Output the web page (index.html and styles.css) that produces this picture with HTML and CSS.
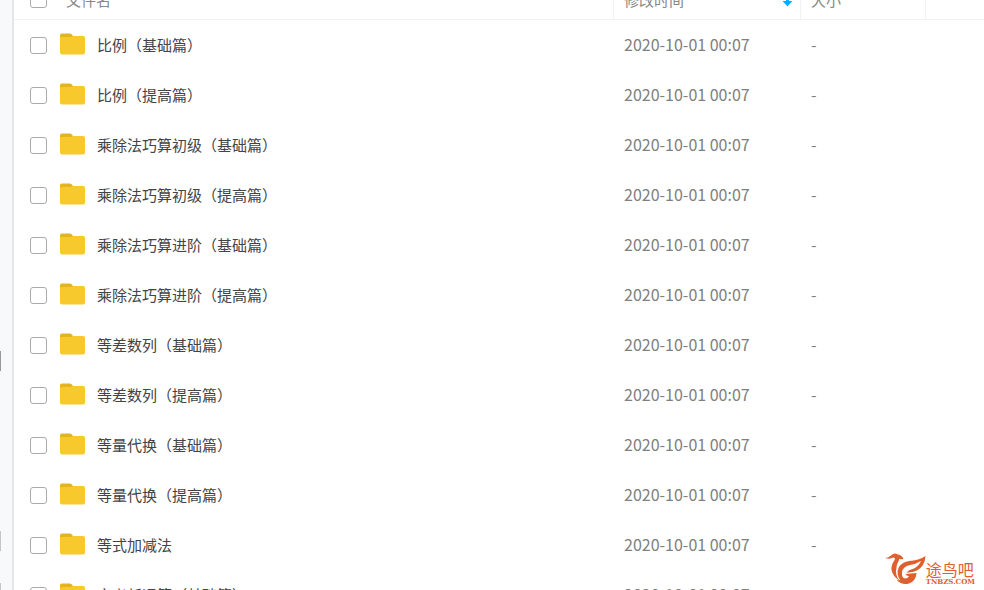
FILE: index.html
```html
<!DOCTYPE html>
<html lang="zh-CN">

<head>
    <meta charset="UTF-8">
    <meta name="viewport" content="width=device-width, initial-scale=1.0">
    <title>文件列表</title>
    <link rel="stylesheet" href="styles.css">
</head>

<body>

    <svg class="symbols" aria-hidden="true">
        <symbol id="folder" viewBox="0 0 25 22">
            <path d="M0 10V2.500Q0 .5 2 .5H10Q11.500 .5 12.300 2L13.500 4V10Z" fill="#e3b41f" />
            <path d="M0 5Q0 4 1.500 4H11L13 3H23Q25 3 25 5V19.500Q25 21.500 23 21.500H2Q0 21.500 0 19.500Z" fill="#f7c92c" />
        </symbol>
    </svg>

    <div class="page">
        <aside class="rail">
            <span class="rail-mark"></span>
            <span class="rail-mark light"></span>
            <span class="rail-mark light"></span>
        </aside>

        <main class="files">
            <table>
                <colgroup>
                    <col class="col-check">
                    <col class="col-name">
                    <col class="col-date">
                    <col class="col-size">
                    <col class="col-rest">
                </colgroup>
                <thead>
                    <tr>
                        <th><input type="checkbox" aria-label="全选"></th>
                        <th>文件名</th>
                        <th class="split">
                            <div class="sort">修改时间
                                <svg width="11" height="14" viewBox="0 0 11 14" aria-hidden="true">
                                    <path d="M4 0H7V8H10.500L5.500 13.500L.5 8H4Z" fill="#09aaff" />
                                </svg>
                            </div>
                        </th>
                        <th class="split">大小</th>
                        <th class="split"></th>
                    </tr>
                </thead>
                <tbody id="file-list"></tbody>
            </table>
        </main>
    </div>

    <div class="logo">
        <svg width="41" height="34" viewBox="0 0 41 34" aria-hidden="true">
            <path d="M0 6Q3 6 6 3.500Q9 .5 12 2Q16 4 14 8Q11 13 11 19Q11 25 15 29Q8 25 6.500 18Q6 13 9 9Q11 6 8.500 5.500Q5 7.500 0 6Z" fill="#e0602d" />
            <path d="M13 2.500Q17 3 18.500 7Q15 8 12.500 6Z" fill="#e0602d" />
            <path d="M40.500 4Q40 14 32 18.500Q27 21 21.500 20.500Q24 17.500 29 16.500Q34 14 36 9Q31 12 25 13Q18 14.500 17 20Q16.500 26 20 26.500Q23 26.500 24 24Q21 24 20.500 22Q26 21.500 31.500 21Q31 29 24 31.500Q17 33.500 11.500 28Q14 28.500 15 28Q11 22 13.500 16Q16 10.500 24 9Q34 8.500 40.500 4Z" fill="#e0602d" />
        </svg>
        <div class="logo-text">
            <span class="logo-name">途鸟吧</span>
            <span class="logo-site">TNBZS.COM</span>
        </div>
    </div>

    <script>
        const files = [
            "比例（基础篇）",
            "比例（提高篇）",
            "乘除法巧算初级（基础篇）",
            "乘除法巧算初级（提高篇）",
            "乘除法巧算进阶（基础篇）",
            "乘除法巧算进阶（提高篇）",
            "等差数列（基础篇）",
            "等差数列（提高篇）",
            "等量代换（基础篇）",
            "等量代换（提高篇）",
            "等式加减法",
            "定义新运算（基础篇）"
        ];

        document.querySelector("#file-list").innerHTML = files.map((name, i) => `
            <tr>
                <td><input type="checkbox" id="file-${i}"></td>
                <td>
                    <label class="file-name" for="file-${i}">
                        <svg width="25" height="22" aria-hidden="true"><use href="#folder" /></svg>
                        ${name}
                    </label>
                </td>
                <td class="date">2020-10-01 00:07</td>
                <td class="size">-</td>
                <td></td>
            </tr>
        `).join("");
    </script>

</body>

</html>
```
FILE: styles.css
```css
body {
    margin: 0;
    height: 100vh;
    overflow: hidden;
    background-color: #fff;
    color: #424446;
    font-family: "Noto Sans CJK SC", sans-serif;
    font-size: 15px;
}

.symbols {
    display: none;
}

.page {
    display: flex;
    height: 100vh;
    overflow: hidden;
}

.rail {
    display: flex;
    flex-direction: column;
    flex: none;
    width: 12px;
    padding-top: 351px;
    border-right: 2px solid #e4e6ea;
    background-color: #f7f9fb;
}

.rail-mark {
    flex: none;
    width: 1px;
    height: 20px;
    background-color: #999;
}

.rail-mark.light {
    background-color: #c4c6c8;
}

.rail-mark + .rail-mark {
    margin-top: 160px;
}

.rail-mark.light + .rail-mark.light {
    margin-top: 32px;
}

.files {
    flex: 1;
    min-width: 0;
}

/* the list is scrolled down a little, under the top edge */
table {
    width: 100%;
    margin-top: -18px;
    table-layout: fixed;
    border-collapse: separate;
    border-spacing: 0;
}

.col-check {
    width: 46px;
}

.col-date {
    width: 187px;
}

.col-size {
    width: 125px;
}

.col-rest {
    width: 59px;
}

th,
td {
    box-sizing: border-box;
    padding: 0;
    text-align: left;
    white-space: nowrap;
}

th {
    height: 38px;
    padding-bottom: 2px;
    border-bottom: 1px solid #f1f2f4;
    color: #888;
    font-weight: normal;
    line-height: 34px;
}

th:nth-child(2) {
    padding-left: 6px;
}

th.split {
    padding-left: 10px;
    border-left: 1px solid #f1f2f4;
}

td {
    height: 50px;
}

td + td {
    padding-bottom: 2px;
}

.sort {
    display: flex;
    justify-content: space-between;
    align-items: center;
    padding-right: 7px;
}

input[type="checkbox"] {
    display: block;
    appearance: none;
    width: 17px;
    height: 17px;
    margin: 0 0 0 16px;
    border: 1px solid #aaa;
    border-radius: 3px;
    background-color: #fff;
}

input[type="checkbox"]:checked {
    background-color: #09aaff;
}

.file-name {
    display: flex;
    align-items: center;
    gap: 12px;
}

.date,
.size {
    padding-left: 11px;
    color: #808080;
    font-size: 16px;
}

.logo {
    position: absolute;
    right: 9px;
    bottom: 4px;
    display: flex;
    align-items: flex-end;
    color: #e0602d;
}

.logo-text {
    display: flex;
    flex-direction: column;
}

.logo-name {
    font-size: 16px;
    line-height: 18px;
}

.logo-site {
    font-family: "DejaVu Serif", serif;
    font-size: 7px;
    font-weight: bold;
    line-height: 8px;
}
```
